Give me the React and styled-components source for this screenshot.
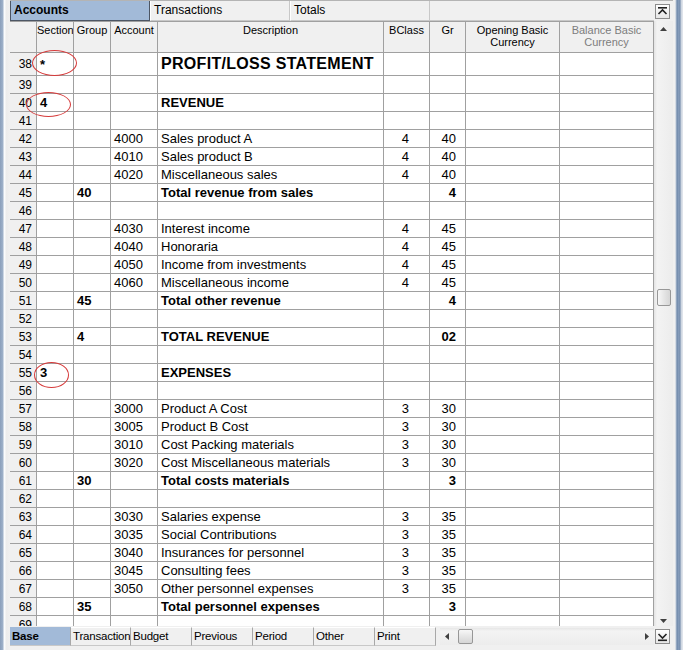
import React from 'react'
import styled, { createGlobalStyle } from 'styled-components'

const GlobalStyle = createGlobalStyle`
  html, body {
    margin: 0;
    padding: 0;
    background: #f0f0f0;
  }
  body {
    font-family: "Liberation Sans", Arial, sans-serif;
    color: #000;
  }
`

// column widths: row number, Section, Group, Account, Description, BClass, Gr, Opening, Balance
const COLS = '27px 37px 37px 47px 226px 46px 36px 94px 94px'

const Window = styled.div`
    display: flex;
    width: 683px;
    height: 650px;
    overflow: hidden;
    background: #f0f0f0;
`

const LeftEdge = styled.div`
    width: 10px;
    flex: none;
    background: linear-gradient(to right, #8a9fbb 0, #9fb2ca 3px, #fafbfc 4px, #fafbfc 5px, #ececec 6px, #f0f0f0 10px);
`

const RightEdge = styled.div`
    width: 10px;
    flex: none;
    background: linear-gradient(to right, #f0f0f0 0, #f0f0f0 2px, #b9c6d6 3px, #6f89ab 4px, #8aa0bd 6px, #6f87a7 7px, #c9d2de 8px, #e6e9ee 10px);
`

const Body = styled.div`
    flex: 1;
    display: flex;
    flex-direction: column;
    min-width: 0;
`

const TabStrip = styled.div`
    display: flex;
    align-items: stretch;
    height: 21px;
    flex: none;
    border-top: 1px solid #b4b4b4;
    box-sizing: border-box;
`

const TopTab = styled.div`
    width: ${p => p.w || 140}px;
    box-sizing: border-box;
    padding: 2px 0 0 3px;
    font-size: 12px;
    font-weight: ${p => (p.active ? 700 : 400)};
    background: ${p => (p.active ? '#a2bad8' : '#f0f0f0')};
    border: 1px solid ${p => (p.active ? '#4d5664' : '#c8c8c8')};
    border-top: none;
    border-left-color: ${p => (p.active ? '#4d5664' : '#fff')};
    white-space: nowrap;
    overflow: hidden;
`

const StripFill = styled.div`
    flex: 1;
    border-bottom: 1px solid #c8c8c8;
`

const EdgeButton = styled.div`
    width: 17px;
    flex: none;
    display: flex;
    align-items: center;
    justify-content: center;
`

const ButtonFace = styled.div`
    width: 15px;
    height: 15px;
    box-sizing: border-box;
    border: 1px solid #8c8c8c;
    background: linear-gradient(#ffffff, #e6e6e6);
    display: flex;
    align-items: center;
    justify-content: center;
`

const Content = styled.div`
    display: flex;
    height: 605px;
    flex: none;
`

const Grid = styled.div`
    display: grid;
    grid-template-columns: ${COLS};
    grid-auto-rows: 18px;
    grid-template-rows: 31px 23px;
    width: 644px;
    height: 605px;
    overflow: hidden;
    background: #fff;
    border-top: 1px solid #a0a0a0;
    box-sizing: border-box;
`

const HeadCell = styled.div`
    background: #f0f0f0;
    border-right: 1px solid #a0a0a0;
    border-bottom: 1px solid #a0a0a0;
    font-size: 11px;
    line-height: 12px;
    text-align: center;
    padding-top: 2px;
    color: ${p => (p.dim ? '#7d7d7d' : '#000')};
    overflow: hidden;
    white-space: pre-line;
`

const RowNum = styled.div`
    background: #f0f0f0;
    border-right: 1px solid #a0a0a0;
    border-bottom: 1px solid #a0a0a0;
    font-size: 12px;
    display: flex;
    align-items: center;
    justify-content: flex-end;
    padding-right: 4px;
    overflow: hidden;
`

const Cell = styled.div`
    position: relative;
    border-right: 1px solid #a0a0a0;
    border-bottom: 1px solid #a0a0a0;
    font-size: ${p => (p.big ? 16 : 13)}px;
    font-weight: ${p => (p.bold ? 700 : 400)};
    letter-spacing: ${p => (p.big ? '0.3px' : '0')};
    display: flex;
    align-items: center;
    justify-content: ${p => (p.right ? 'flex-end' : 'flex-start')};
    padding: ${p => (p.right ? `0 ${p.pr}px 0 0` : '0 0 0 3px')};
    white-space: nowrap;
`

// red hand-drawn style ring around a section code
const Ring = styled.div`
    position: absolute;
    left: ${p => p.x}px;
    top: ${p => p.y}px;
    width: ${p => p.w}px;
    height: ${p => p.h}px;
    border: 1px solid #d63a3a;
    border-radius: 50%;
    z-index: 2;
    pointer-events: none;
`

const VScroll = styled.div`
    width: 19px;
    flex: none;
    display: flex;
    flex-direction: column;
    align-items: center;
    justify-content: space-between;
    background: linear-gradient(to right, #e3e3e3, #f3f3f3 3px, #ececec);
    padding: 6px 0 3px;
    box-sizing: border-box;
    position: relative;
`

const Thumb = styled.div`
    position: absolute;
    left: 3px;
    top: ${p => p.top}px;
    width: 14px;
    height: 17px;
    box-sizing: border-box;
    border: 1px solid #979797;
    border-radius: 2px;
    background: linear-gradient(to right, #f7f7f7, #e2e2e2 60%, #d6d6d6);
`

const BottomRow = styled.div`
    display: flex;
    height: 19px;
    flex: none;
    margin-top: 1px;
`

const BottomTabs = styled.div`
    display: flex;
    width: 430px;
    flex: none;
`

const BottomTab = styled.div`
    width: ${p => p.w}px;
    box-sizing: border-box;
    font-size: 11.5px;
    letter-spacing: -0.2px;
    padding: 2px 0 0 2px;
    font-weight: ${p => (p.active ? 700 : 400)};
    background: ${p => (p.active ? '#a2bad8' : '#f0f0f0')};
    border-right: 1px solid #a8a8a8;
    border-bottom: 1px solid #c8c8c8;
    border-top: 1px solid ${p => (p.active ? '#a2bad8' : '#fff')};
    white-space: nowrap;
    overflow: hidden;
`

const HScroll = styled.div`
    width: 214px;
    flex: none;
    margin-top: 1px;
    height: 17px;
    display: flex;
    align-items: center;
    justify-content: space-between;
    padding: 0 5px;
    box-sizing: border-box;
    position: relative;
    background: linear-gradient(#e6e6e6, #f3f3f3 3px, #ececec);
`

const HThumb = styled.div`
    position: absolute;
    left: 18px;
    top: 1px;
    width: 15px;
    height: 15px;
    box-sizing: border-box;
    border: 1px solid #979797;
    border-radius: 2px;
    background: linear-gradient(#f7f7f7, #e2e2e2 60%, #d6d6d6);
`

const Tri = ({ dir }) => {
    const pts = {
        up: '0,4 3.5,0 7,4',
        down: '0,0 3.5,4 7,0',
        left: '4,0 0,3.5 4,7',
        right: '0,0 4,3.5 0,7',
    }[dir]
    const vert = dir === 'up' || dir === 'down'
    return (
        <svg width={vert ? 7 : 4} height={vert ? 4 : 7} viewBox={vert ? '0 0 7 4' : '0 0 4 7'}>
            <polygon points={pts} fill="#404040" />
        </svg>
    )
}

// jump-to-top / jump-to-bottom glyph: a bar with a chevron
const JumpIcon = ({ down }) => (
    <svg width="11" height="11" viewBox="0 0 11 11">
        {down ? (
            <>
                <path d="M1.5 3 L5.5 7 L9.5 3" stroke="#222" strokeWidth="1.6" fill="none" />
                <rect x="1" y="8.5" width="9" height="1.6" fill="#222" />
            </>
        ) : (
            <>
                <rect x="1" y="1" width="9" height="1.6" fill="#222" />
                <path d="M1.5 8 L5.5 4 L9.5 8" stroke="#222" strokeWidth="1.6" fill="none" />
            </>
        )}
    </svg>
)

const rows = [
    { n: 38, section: '*', desc: 'PROFIT/LOSS STATEMENT', big: true, ring: { x: -5, y: -3, w: 43, h: 24 } },
    { n: 39 },
    { n: 40, section: '4', desc: 'REVENUE', head: true, ring: { x: -11, y: -2, w: 43, h: 23 } },
    { n: 41 },
    { n: 42, account: '4000', desc: 'Sales product A', bclass: '4', gr: '40' },
    { n: 43, account: '4010', desc: 'Sales product B', bclass: '4', gr: '40' },
    { n: 44, account: '4020', desc: 'Miscellaneous sales', bclass: '4', gr: '40' },
    { n: 45, group: '40', desc: 'Total revenue from sales', gr: '4', total: true },
    { n: 46 },
    { n: 47, account: '4030', desc: 'Interest income', bclass: '4', gr: '45' },
    { n: 48, account: '4040', desc: 'Honoraria', bclass: '4', gr: '45' },
    { n: 49, account: '4050', desc: 'Income from investments', bclass: '4', gr: '45' },
    { n: 50, account: '4060', desc: 'Miscellaneous income', bclass: '4', gr: '45' },
    { n: 51, group: '45', desc: 'Total other revenue', gr: '4', total: true },
    { n: 52 },
    { n: 53, group: '4', desc: 'TOTAL REVENUE', gr: '02', total: true },
    { n: 54 },
    { n: 55, section: '3', desc: 'EXPENSES', head: true, ring: { x: -3, y: -2, w: 33, h: 24 } },
    { n: 56 },
    { n: 57, account: '3000', desc: 'Product A Cost', bclass: '3', gr: '30' },
    { n: 58, account: '3005', desc: 'Product B Cost', bclass: '3', gr: '30' },
    { n: 59, account: '3010', desc: 'Cost Packing materials', bclass: '3', gr: '30' },
    { n: 60, account: '3020', desc: 'Cost Miscellaneous materials', bclass: '3', gr: '30' },
    { n: 61, group: '30', desc: 'Total costs materials', gr: '3', total: true },
    { n: 62 },
    { n: 63, account: '3030', desc: 'Salaries expense', bclass: '3', gr: '35' },
    { n: 64, account: '3035', desc: 'Social Contributions', bclass: '3', gr: '35' },
    { n: 65, account: '3040', desc: 'Insurances for personnel', bclass: '3', gr: '35' },
    { n: 66, account: '3045', desc: 'Consulting fees', bclass: '3', gr: '35' },
    { n: 67, account: '3050', desc: 'Other personnel expenses', bclass: '3', gr: '35' },
    { n: 68, group: '35', desc: 'Total personnel expenses', gr: '3', total: true },
    { n: 69 },
]

const headers = [
    { t: '' },
    { t: 'Section' },
    { t: 'Group' },
    { t: 'Account' },
    { t: 'Description' },
    { t: 'BClass' },
    { t: 'Gr' },
    { t: 'Opening Basic\nCurrency' },
    { t: 'Balance Basic\nCurrency', dim: true },
]

const bottomTabs = [
    ['Base', 61],
    ['Transaction', 60],
    ['Budget', 61],
    ['Previous', 61],
    ['Period', 61],
    ['Other', 61],
    ['Print', 61],
]

const Row = ({ r }) => (
    <>
        <RowNum>{r.n}</RowNum>
        <Cell bold={r.head || r.big}>
            {r.section}
            {r.ring && <Ring {...r.ring} />}
        </Cell>
        <Cell bold={r.total}>{r.group}</Cell>
        <Cell>{r.account}</Cell>
        <Cell bold={r.head || r.total || r.big} big={r.big}>{r.desc}</Cell>
        <Cell right pr={20}>{r.bclass}</Cell>
        <Cell right pr={9} bold={r.total}>{r.gr}</Cell>
        <Cell />
        <Cell />
    </>
)

const App = () => (
    <Window>
        <GlobalStyle />
        <LeftEdge />
        <Body>
            <TabStrip>
                <TopTab active w={140}>Accounts</TopTab>
                <TopTab>Transactions</TopTab>
                <TopTab>Totals</TopTab>
                <StripFill />
                <EdgeButton>
                    <ButtonFace><JumpIcon /></ButtonFace>
                </EdgeButton>
                <div style={{ width: 2 }} />
            </TabStrip>
            <Content>
                <Grid>
                    {headers.map((h, i) => (
                        <HeadCell key={i} dim={h.dim}>{h.t}</HeadCell>
                    ))}
                    {rows.map(r => (
                        <Row key={r.n} r={r} />
                    ))}
                </Grid>
                <VScroll>
                    <Tri dir="up" />
                    <Thumb top={268} />
                    <Tri dir="down" />
                </VScroll>
            </Content>
            <BottomRow>
                <BottomTabs>
                    {bottomTabs.map(([t, w], i) => (
                        <BottomTab key={t} w={w} active={i === 0}>{t}</BottomTab>
                    ))}
                </BottomTabs>
                <HScroll>
                    <Tri dir="left" />
                    <HThumb />
                    <Tri dir="right" />
                </HScroll>
                <EdgeButton>
                    <ButtonFace><JumpIcon down /></ButtonFace>
                </EdgeButton>
            </BottomRow>
        </Body>
        <RightEdge />
    </Window>
)

export default App
